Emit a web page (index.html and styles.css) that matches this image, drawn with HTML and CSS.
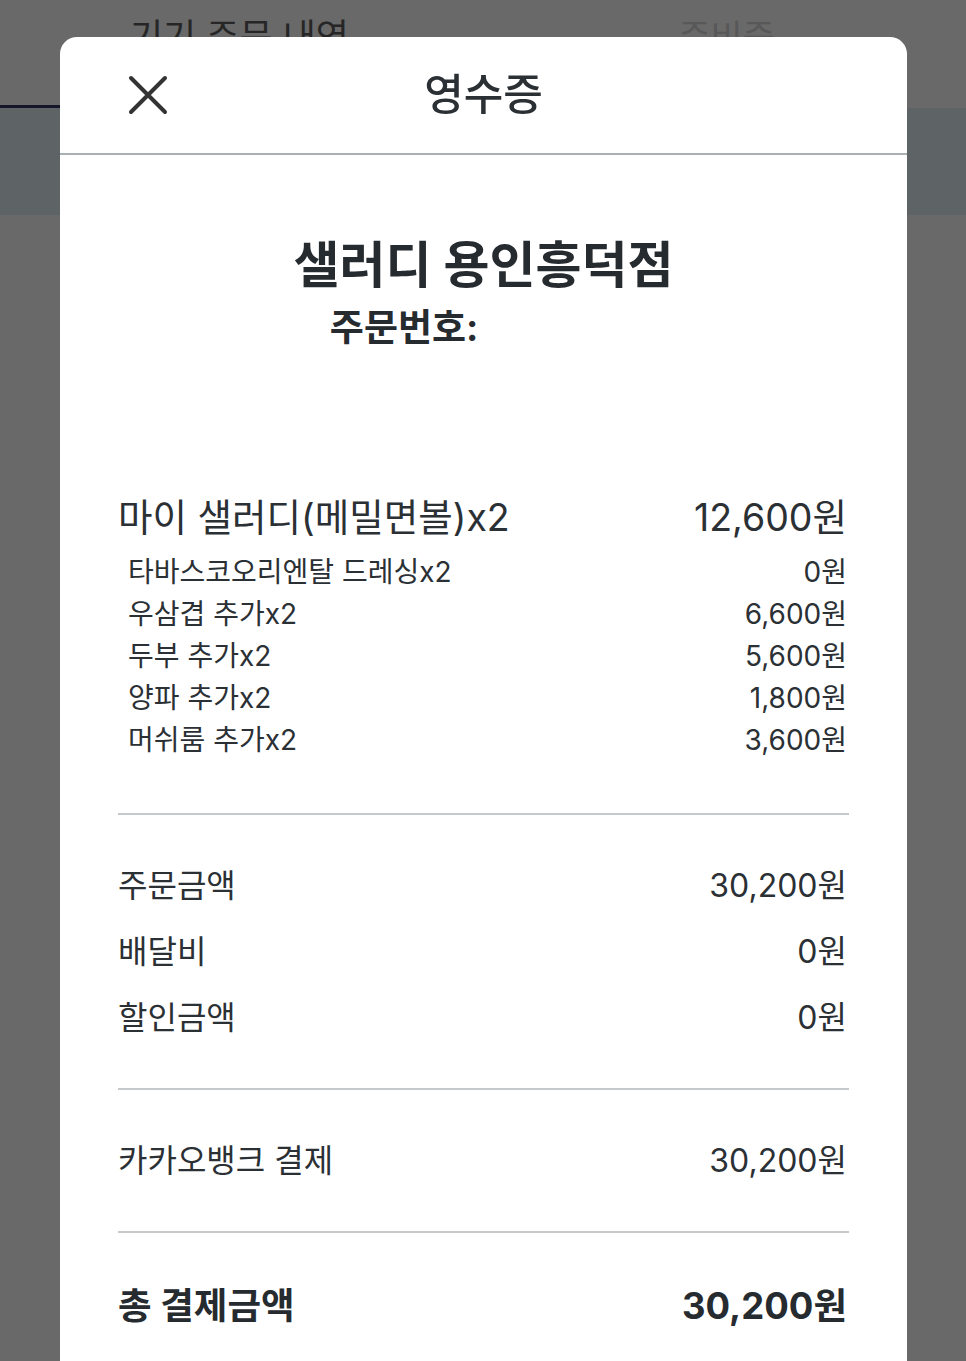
FILE: index.html
```html
<!DOCTYPE html>
<html lang="ko">
<head>
<meta charset="utf-8">
<title>영수증</title>
<link rel="stylesheet" href="styles.css">
</head>
<body>
<div class="page">
  <div class="topbar">
    <span class="page-title">기기 주문 내역</span>
    <span class="status">준비중</span>
  </div>
  <div class="tabline"></div>
  <div class="band"></div>
</div>

<div class="modal">
  <div class="modal-header">
    <button class="close" aria-label="닫기">
      <svg width="40" height="40" viewBox="0 0 40 40"><path d="M3 3 L37 37 M37 3 L3 37" stroke="#333333" stroke-width="4" stroke-linecap="round" fill="none"/></svg>
    </button>
    <h1 class="modal-title">영수증</h1>
  </div>
  <div class="modal-body">
    <h2 class="store">샐러디 용인흥덕점</h2>
    <p class="order-no">주문번호: <span class="order-value"></span></p>

    <div class="items">
      <div class="row main-item"><span>마이 샐러디(메밀면볼)x2</span><span>12,600원</span></div>
      <div class="subs">
        <div class="row sub-item"><span>타바스코오리엔탈 드레싱x2</span><span>0원</span></div>
        <div class="row sub-item"><span>우삼겹 추가x2</span><span>6,600원</span></div>
        <div class="row sub-item"><span>두부 추가x2</span><span>5,600원</span></div>
        <div class="row sub-item"><span>양파 추가x2</span><span>1,800원</span></div>
        <div class="row sub-item"><span>머쉬룸 추가x2</span><span>3,600원</span></div>
      </div>
    </div>

    <div class="section">
      <div class="row line"><span>주문금액</span><span>30,200원</span></div>
      <div class="row line"><span>배달비</span><span>0원</span></div>
      <div class="row line"><span>할인금액</span><span>0원</span></div>
    </div>

    <div class="section">
      <div class="row line"><span>카카오뱅크 결제</span><span>30,200원</span></div>
    </div>

    <div class="section total-section">
      <div class="row total"><span>총 결제금액</span><span>30,200원</span></div>
    </div>
  </div>
</div>
</body>
</html>
```

FILE: styles.css
```css
* { box-sizing: border-box; }

html, body {
  margin: 0;
  padding: 0;
}

body {
  background: #696969;
  font-family: Inter, "Noto Sans CJK KR", "Noto Sans", sans-serif;
  color: #2b3035;
  width: 966px;
  height: 1361px;
  overflow: hidden;
}

.page { width: 966px; }

.topbar {
  height: 105px;
  display: flex;
  align-items: flex-start;
  padding-left: 130px;
  padding-top: 12px;
}

.page-title {
  font-size: 36px;
  line-height: 50px;
  color: #262626;
}

.status {
  margin-left: auto;
  margin-right: 191px;
  font-size: 35px;
  line-height: 50px;
  color: #585858;
}

.tabline {
  width: 480px;
  height: 3px;
  background: #16162a;
}

.band {
  height: 107px;
  background: #5e6366;
}

.modal {
  position: fixed;
  left: 60px;
  top: 37px;
  width: 847px;
  bottom: -30px;
  background: #ffffff;
  border-radius: 17px 17px 0 0;
}

.modal-header {
  height: 118px;
  border-bottom: 2px solid #a9b0b3;
  display: flex;
  align-items: center;
  justify-content: center;
  position: relative;
}

.close {
  position: absolute;
  left: 68px;
  top: 38px;
  width: 40px;
  height: 40px;
  padding: 0;
  border: 0;
  background: none;
  display: block;
}
.close svg { display: block; }

.modal-title {
  margin: 0;
  font-size: 43px;
  font-weight: 500;
  line-height: 60px;
  margin-top: -2px;
  color: #2b3035;
}

.modal-body {
  padding: 80px 58px 0 58px;
}

.store {
  margin: 0;
  text-align: center;
  font-size: 50px;
  font-weight: 700;
  line-height: 60px;
  color: #262b30;
}

.order-no {
  margin: 8px 0 0 0;
  text-align: center;
  font-size: 37px;
  font-weight: 700;
  line-height: 50px;
  color: #262b30;
}

.order-value {
  display: inline-block;
  width: 150px;
}

.row {
  display: flex;
  justify-content: space-between;
  align-items: center;
}
.row span:last-child { padding-right: 2px; }

.items {
  padding-top: 140px;
  padding-bottom: 52px;
}

.main-item {
  font-size: 37.5px;
  line-height: 50px;
  color: #2b3035;
}

.subs { margin-top: 8px; }

.sub-item {
  font-size: 28px;
  line-height: 42px;
  padding-left: 10px;
  color: #2b3035;
}

.section {
  border-top: 2px solid #c6c9cc;
  padding: 38px 0 37px 0;
}

.line {
  font-size: 32px;
  line-height: 66px;
  color: #2b3035;
}

.total-section { padding-top: 40px; }

.total {
  font-size: 36.5px;
  font-weight: 700;
  line-height: 66px;
  color: #262b30;
}
```
